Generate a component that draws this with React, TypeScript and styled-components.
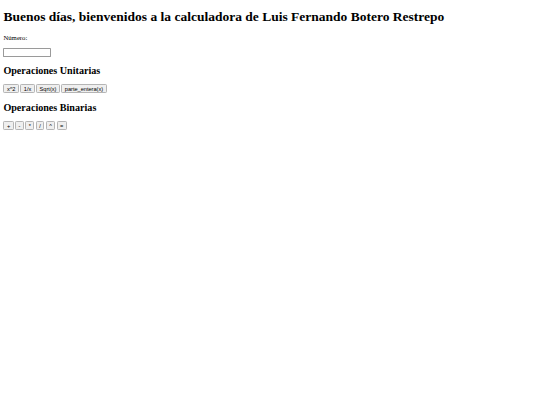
import styled, { createGlobalStyle } from "styled-components"

// the reference is a 1280px wide page shrunk into 540px
const SCALE = 540 / 1280

const GlobalStyle = createGlobalStyle`
  html, body {
    margin: 0;
    background: #ffffff;
  }
`

const Page = styled.main`
  zoom: ${SCALE};
  margin: 8px;
  font-family: "Liberation Serif", "Times New Roman", serif;
  font-size: 16px;
  color: #000000;
`

const Title = styled.h1`
  font-size: 32px;
  font-weight: bold;
  margin: 0.67em 0;
`

const Label = styled.p`
  margin: 16px 0;
`

const NumberInput = styled.input`
  box-sizing: border-box;
  width: 112px;
  height: 21px;
  padding: 1px 2px;
  border: 2px solid #9a9a9a;
  border-radius: 2px;
  font-family: "Liberation Sans", Arial, sans-serif;
  font-size: 13.33px;
`

const Section = styled.h2`
  font-size: 24px;
  font-weight: bold;
  margin: 0.83em 0;
`

const ButtonRow = styled.div`
  display: flex;
  gap: 3px;
`

const OpButton = styled.button`
  font-family: "Liberation Sans", Arial, sans-serif;
  font-size: 13.33px;
  padding: 1px 6px;
  background: #efefef;
  color: #000000;
  border: 2px solid #b5b5b5;
  border-radius: 3px;
  line-height: normal;
`

const unarias = ["x^2", "1/x", "Sqrt(x)", "parte_entera(x)"]
const binarias = ["+", "-", "*", "/", "^", "="]

export default function App() {
  return (
    <>
      <GlobalStyle />
      <Page>
        <Title>Buenos días, bienvenidos a la calculadora de Luis Fernando Botero Restrepo</Title>
        <Label>Número:</Label>
        <NumberInput type="text" />
        <Section>Operaciones Unitarias</Section>
        <ButtonRow>
          {unarias.map((op) => (
            <OpButton key={op}>{op}</OpButton>
          ))}
        </ButtonRow>
        <Section>Operaciones Binarias</Section>
        <ButtonRow>
          {binarias.map((op) => (
            <OpButton key={op}>{op}</OpButton>
          ))}
        </ButtonRow>
      </Page>
    </>
  )
}
